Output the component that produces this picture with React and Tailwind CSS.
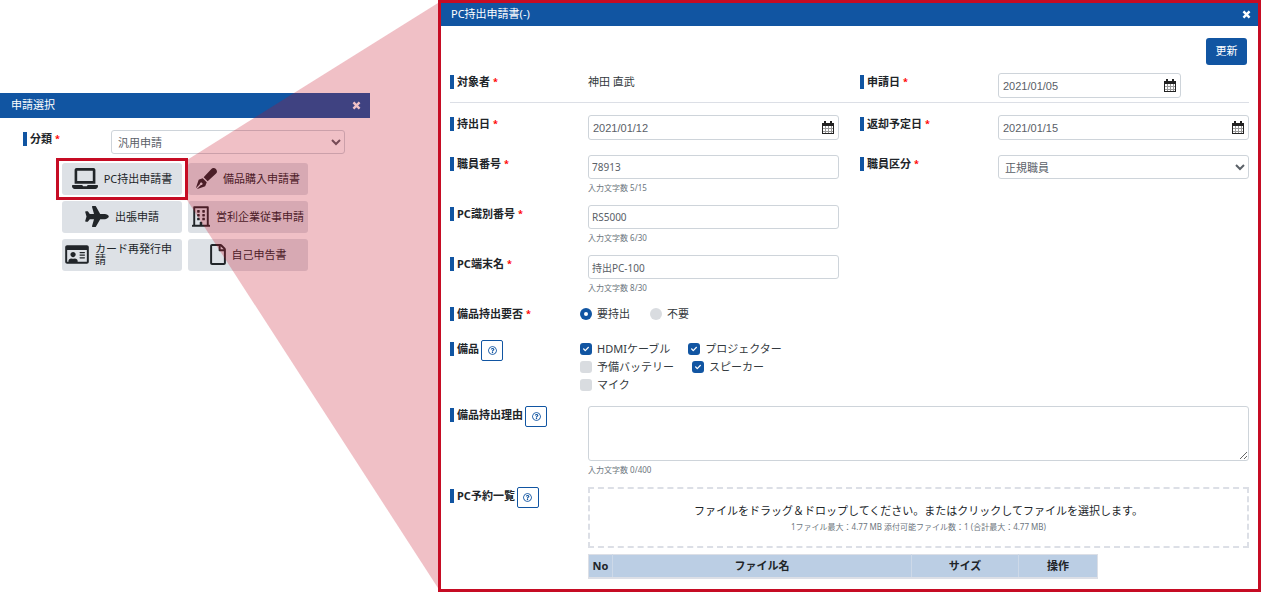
import React, { useId } from "react";
import {
  FaLaptop,
  FaPenFancy,
  FaPlane,
  FaRegBuilding,
  FaRegIdCard,
  FaRegFile,
  FaRegQuestionCircle,
  FaCheck,
} from "react-icons/fa";

const LAUNCHERS = [
  { label: "PC持出申請書", Icon: FaLaptop, size: "w-[26px]", selected: true },
  { label: "備品購入申請書", Icon: FaPenFancy, size: "w-[21px]" },
  { label: "出張申請", Icon: FaPlane, size: "w-[24px]" },
  { label: "営利企業従事申請", Icon: FaRegBuilding, size: "w-[18px]" },
  { label: "カード再発行申請", Icon: FaRegIdCard, size: "w-[24px]" },
  { label: "自己申告書", Icon: FaRegFile, size: "w-[16px]" },
];

const BOX = "rounded-[3px] border border-[#ced4da] bg-white text-[#5a6067]";

function CalendarIcon() {
  return (
    <svg viewBox="0 0 12 13" className="h-[13px] w-[12px]" shapeRendering="crispEdges" aria-hidden="true">
      <path d="M0 2h12v11H0z" fill="#222" />
      <path d="M2 0h2v2H2zM8 0h2v2H8z" fill="#222" />
      <path d="M1 5h10v7H1z" fill="#fff" />
      <path d="M3 5h1v7H3zM6 5h1v7H6zM9 5h1v7H9zM1 7h10v1H1zM1 10h10v1H1z" fill="#999" />
    </svg>
  );
}

function CloseIcon() {
  return (
    <svg viewBox="0 0 10 10" className="h-[9px] w-[9px]" aria-hidden="true">
      <path d="M1.6 1.6l6.8 6.8M8.4 1.6L1.6 8.4" stroke="currentColor" strokeWidth="2.7" />
    </svg>
  );
}

function Label({ children, htmlFor, required, help }) {
  const Tag = htmlFor ? "label" : "span";
  return (
    <div className="flex items-start self-start">
      <Tag htmlFor={htmlFor} className="mt-[2px] flex items-center gap-[3px] text-[11px] leading-[14px] font-bold text-[#212529]">
        <span className="h-[14px] w-[4px] bg-[#1155a2]" />
        <span>{children}</span>
        {required && <span className="text-[9px] text-[#f00]">*</span>}
      </Tag>
      {help && (
        <button
          type="button"
          aria-label="ヘルプ"
          className="ml-[2px] flex h-[21px] w-[22px] items-center justify-center rounded-[2px] border border-[#1155a2] bg-white text-[#1155a2]"
        >
          <FaRegQuestionCircle className="h-[9px] w-[9px]" />
        </button>
      )}
    </div>
  );
}

function Field({ label, required, help, htmlFor, wide, children }) {
  return (
    <div className={wide ? "col-span-2 grid grid-cols-[138px_1fr]" : "grid grid-cols-[138px_1fr]"}>
      <Label htmlFor={htmlFor} required={required} help={help}>
        {label}
      </Label>
      <div className="min-w-0">{children}</div>
    </div>
  );
}

function DateField({ label, value, narrow }) {
  const id = useId();
  return (
    <Field label={label} required htmlFor={id}>
      <div className={`${BOX} flex h-[25px] items-center pr-1 ${narrow ? "w-[183px]" : "w-full"}`}>
        <input
          id={id}
          defaultValue={value}
          className="h-full min-w-0 flex-1 bg-transparent px-1 font-['Liberation_Sans',sans-serif] text-[11px] outline-none"
        />
        <button type="button" aria-label="カレンダー">
          <CalendarIcon />
        </button>
      </div>
    </Field>
  );
}

function Counter({ children }) {
  return <p className="pt-px text-[8px] leading-[15px] text-[#6c757d]">入力文字数 {children}</p>;
}

function TextField({ label, value, count }) {
  const id = useId();
  return (
    <Field label={label} required htmlFor={id}>
      <input id={id} defaultValue={value} className={`${BOX} block h-[24px] w-full px-[3px] text-[10px]`} />
      <Counter>{count}</Counter>
    </Field>
  );
}

function Choice({ type, label, checked }) {
  const radio = type === "radio";
  return (
    <label className="flex items-center gap-[5px] text-[11px] leading-[18px] text-[#343a40]">
      <span className="grid h-[12px] w-[12px] place-items-center">
        <input
          type={type}
          name={radio ? "need" : undefined}
          defaultChecked={checked}
          className={`peer col-start-1 row-start-1 h-[12px] w-[12px] appearance-none bg-[#d9dce0] checked:bg-[#1155a2] ${radio ? "rounded-full" : "rounded-[3px]"}`}
        />
        {radio ? (
          <span className="pointer-events-none col-start-1 row-start-1 hidden h-[4px] w-[4px] rounded-full bg-white peer-checked:block" />
        ) : (
          <FaCheck className="pointer-events-none col-start-1 row-start-1 hidden h-[6px] w-[6px] text-white peer-checked:block" />
        )}
      </span>
      {label}
    </label>
  );
}

function Launcher({ label, Icon, size, selected }) {
  return (
    <div className="relative">
      <button
        type="button"
        className="flex h-[32px] w-full items-center justify-center gap-[6px] rounded-[3px] bg-[#dde1e6] px-[3px] pb-[2px] text-left text-[11px] leading-[11px] text-[#212529]"
      >
        <Icon className={`h-[21px] shrink-0 ${size}`} />
        <span>{label}</span>
      </button>
      {selected && <span className="pointer-events-none absolute -inset-x-[6px] -inset-y-[5px] z-20 border-[3px] border-[#c60c24]" />}
    </div>
  );
}

function Selector() {
  return (
    <section className="w-[370px] bg-white">
      <header className="flex h-[25px] items-center justify-between bg-[#1155a2] pr-[9px] pl-[11px] text-white">
        <h2 className="text-[11px]">申請選択</h2>
        <button type="button" aria-label="閉じる">
          <CloseIcon />
        </button>
      </header>
      <div className="pt-3 pr-[25px] pl-[23px]">
        <div className="grid grid-cols-[88px_1fr]">
          <Label htmlFor="category" required>
            分類
          </Label>
          <select id="category" className={`${BOX} h-[24px] w-full px-[2px] text-[11px]`}>
            <option>汎用申請</option>
          </select>
        </div>
      </div>
      <div className="mt-[9px] grid grid-cols-2 gap-[6px] pr-[62px] pl-[62px]">
        {LAUNCHERS.map((l) => (
          <Launcher key={l.label} {...l} />
        ))}
      </div>
    </section>
  );
}

function RequestForm() {
  return (
    <section className="min-w-0 flex-1 border-[3px] border-[#c60c24] bg-white">
      <header className="flex h-[23px] items-center justify-between bg-[#1155a2] pr-[7px] pl-[10px] text-white">
        <h2 className="text-[11px]">PC持出申請書(-)</h2>
        <button type="button" aria-label="閉じる">
          <CloseIcon />
        </button>
      </header>
      <form className="px-[9px] pt-3 pb-2">
        <div className="flex justify-end pr-[2px]">
          <button type="button" className="h-[27px] w-[41px] rounded-[3px] bg-[#1155a2] text-[11px] text-white">
            更新
          </button>
        </div>
        <div className="mt-2 grid grid-cols-2 gap-x-[21px] border-b border-[#dcdfe6] pb-1">
          <Field label="対象者" required>
            <p className="text-[11px] leading-[18px] text-[#343a40]">神田 直武</p>
          </Field>
          <DateField label="申請日" value="2021/01/05" narrow />
        </div>
        <div className="mt-3 grid grid-cols-2 gap-x-[21px] gap-y-[10px]">
          <div className="col-span-2 grid grid-cols-2 gap-x-[21px] pb-[5px]">
            <DateField label="持出日" value="2021/01/12" />
            <DateField label="返却予定日" value="2021/01/15" />
          </div>
          <TextField label="職員番号" value="78913" count="5/15" />
          <Field label="職員区分" required htmlFor="staff-type">
            <select id="staff-type" className={`${BOX} block h-[24px] w-full px-[2px] text-[11px]`}>
              <option>正規職員</option>
            </select>
          </Field>
          <div className="col-span-2 grid grid-cols-2 gap-x-[21px] gap-y-[10px]">
            <TextField label="PC識別番号" value="RS5000" count="6/30" />
            <span />
            <TextField label="PC端末名" value="持出PC-100" count="8/30" />
          </div>
          <Field label="備品持出要否" required wide>
            <div className="-ml-2 flex h-[25px] items-start gap-5">
              <Choice type="radio" label="要持出" checked />
              <Choice type="radio" label="不要" />
            </div>
          </Field>
          <Field label="備品" help wide>
            <div className="-ml-2 pb-[2px]">
              <div className="flex gap-[18px]">
                <Choice type="checkbox" label="HDMIケーブル" checked />
                <Choice type="checkbox" label="プロジェクター" checked />
              </div>
              <div className="flex gap-[18px]">
                <Choice type="checkbox" label="予備バッテリー" />
                <Choice type="checkbox" label="スピーカー" checked />
              </div>
              <div className="flex">
                <Choice type="checkbox" label="マイク" />
              </div>
            </div>
          </Field>
          <Field label="備品持出理由" help wide htmlFor="reason">
            <textarea id="reason" className={`${BOX} block h-[55px] w-full p-1 text-[10px]`} />
            <Counter>0/400</Counter>
          </Field>
          <Field label="PC予約一覧" help wide>
            <button
              type="button"
              className="flex h-[61px] w-full flex-col items-center justify-center border-2 border-dashed border-[#dcdfe6] text-[#212529]"
            >
              <span className="text-[11px] leading-[18px]">ファイルをドラッグ＆ドロップしてください。またはクリックしてファイルを選択します。</span>
              <span className="text-[8px] leading-[14px] text-[#6c757d]">1ファイル最大：4.77 MB 添付可能ファイル数：1 (合計最大：4.77 MB)</span>
            </button>
            <table className="mt-[6px] w-[510px] table-fixed text-[11px] leading-[14px] text-[#212529]">
              <thead>
                <tr className="h-[23px] border border-b-2 border-[#dcdfe6] bg-[#bbcee4]">
                  <th className="w-[24px] border-r border-[#cdd9e8]">No</th>
                  <th className="border-r border-[#cdd9e8]">ファイル名</th>
                  <th className="w-[107px] border-r border-[#cdd9e8]">サイズ</th>
                  <th className="w-[79px]">操作</th>
                </tr>
              </thead>
            </table>
          </Field>
        </div>
      </form>
    </section>
  );
}

export default function App() {
  return (
    <main className="flex min-h-screen bg-white font-['Noto_Sans','Noto_Sans_CJK_JP',sans-serif]">
      <div className="relative w-[438px] shrink-0 pt-[93px]">
        <Selector />
        <svg
          viewBox="0 0 438 592"
          preserveAspectRatio="none"
          className="pointer-events-none absolute inset-0 z-10 h-full w-full"
          aria-hidden="true"
        >
          <path d="M187 160 438 3V588L187 200z" fill="#c60c24" fillOpacity=".26" />
        </svg>
      </div>
      <RequestForm />
    </main>
  );
}
